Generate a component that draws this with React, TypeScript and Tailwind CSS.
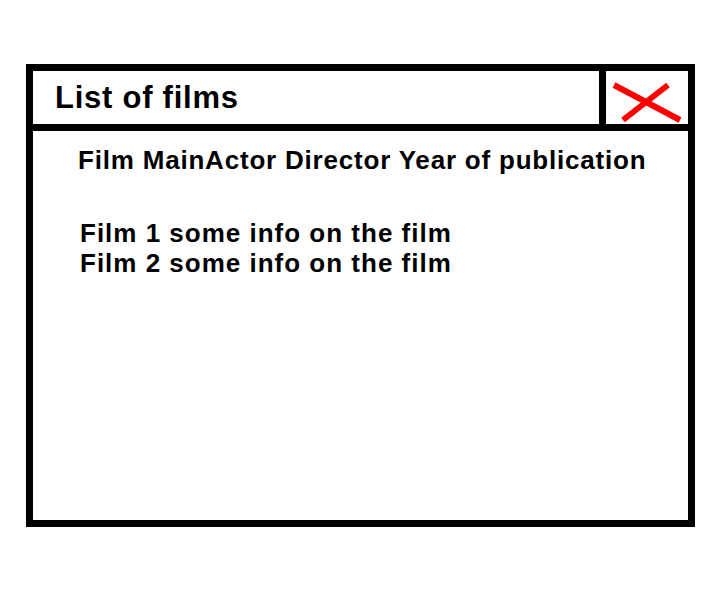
export default function App() {
  const films = [
    'Film 1 some info on the film',
    'Film 2 some info on the film',
  ];

  return (
    <div className="w-[721px] h-[609px] bg-white pl-[26px] pt-[64px] font-['Liberation_Sans',Arial,sans-serif] text-black">
      <div className="w-[669px] h-[463px] border-[7px] border-black flex flex-col">
        {/* Title bar */}
        <div className="flex h-[60px] border-b-[7px] border-black">
          <div className="flex-1 pl-[22px] pt-[1px] text-[31px] leading-[52px] font-bold tracking-[0.75px]">
            List of films
          </div>
          <div className="w-[89px] border-l-[7px] border-black">
            <svg width="82" height="53" viewBox="0 0 82 53">
              <line x1="8" y1="14" x2="74" y2="49" stroke="#ff0000" strokeWidth="6" />
              <line x1="62" y1="14" x2="17" y2="49" stroke="#ff0000" strokeWidth="6" />
            </svg>
          </div>
        </div>

        {/* Content */}
        <div className="flex-1 flex flex-col">
          <div className="mt-[14px] pl-[45px] text-[26px] leading-[30px] font-bold tracking-[0.8px] whitespace-nowrap">
            Film MainActor Director Year of publication
          </div>
          <div className="mt-[43px] pl-[47px] flex flex-col">
            {films.map((f) => (
              <div key={f} className="text-[26px] leading-[30px] font-bold tracking-[1px] whitespace-nowrap">
                {f}
              </div>
            ))}
          </div>
        </div>
      </div>
    </div>
  );
}
